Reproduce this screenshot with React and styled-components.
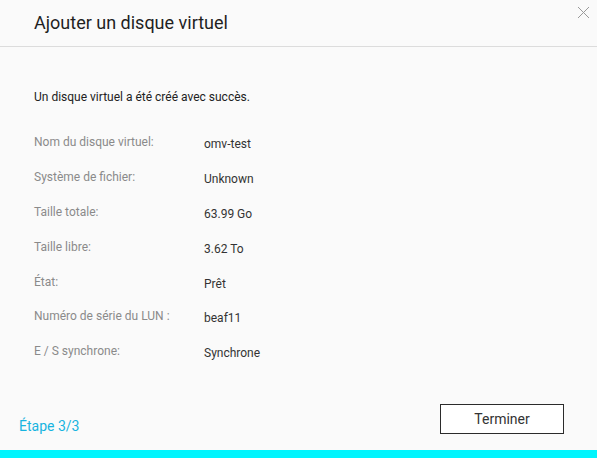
import React from 'react';
import styled, {createGlobalStyle} from 'styled-components';

const GlobalStyle = createGlobalStyle`
    html, body {
        margin: 0;
        padding: 0;
        background: #fafafa;
    }
    body {
        font-family: Roboto, "Liberation Sans", Arial, sans-serif;
    }
`
const Dialog = styled.div`
    position: relative;
    display: flex;
    flex-direction: column;
    width: 597px;
    height: 458px;
    background: #fafafa;
    box-sizing: border-box;
`
const Header = styled.header`
    display: flex;
    align-items: center;
    height: 47px;
    padding: 0 34px;
    border-bottom: 1px solid #dcdcdc;
    box-sizing: border-box;
`
const Title = styled.h1`
    margin: 0;
    padding-bottom: 2px;
    font-size: 18px;
    font-weight: 400;
    color: #1f1f1f;
`
const CloseBtn = styled.button`
    position: absolute;
    top: 6px;
    right: 7px;
    width: 13px;
    height: 13px;
    padding: 0;
    border: none;
    background: transparent;
    cursor: pointer;
    svg {
        display: block;
    }
`
const Content = styled.div`
    flex: 1;
    padding: 42px 34px 0 34px;
`
const Message = styled.p`
    margin: 0 0 20px 0;
    font-size: 12px;
    line-height: 16px;
    color: #222;
`
const InfoRow = styled.div`
    display: grid;
    grid-template-columns: 170px 1fr;
    align-items: center;
    height: 34.8px;
    font-size: 12px;
`
const Label = styled.span`
    color: #8a8a8a;
`
const Value = styled.span`
    color: #333;
    padding-top: 4px;
`
const Footer = styled.footer`
    display: flex;
    justify-content: space-between;
    align-items: flex-end;
    padding: 0 33px 16px 19px;
`
const Step = styled.span`
    font-size: 14px;
    line-height: 16px;
    color: #16b4e0;
`
const FinishBtn = styled.button`
    width: 124px;
    height: 30px;
    border: 1px solid #2b2b2b;
    background: #fff;
    font-family: inherit;
    font-size: 14px;
    color: #333;
    cursor: pointer;
`
const BottomBar = styled.div`
    height: 8px;
    background: #00f5fd;
`

const rows = [
    ['Nom du disque virtuel:', 'omv-test'],
    ['Système de fichier:', 'Unknown'],
    ['Taille totale:', '63.99 Go'],
    ['Taille libre:', '3.62 To'],
    ['État:', 'Prêt'],
    ['Numéro de série du LUN :', 'beaf11'],
    ['E / S synchrone:', 'Synchrone'],
];

export default function App() {
    return (
        <Dialog>
            <GlobalStyle />
            <Header>
                <Title>Ajouter un disque virtuel</Title>
            </Header>
            <CloseBtn aria-label="Fermer">
                <svg width="13" height="13" viewBox="0 0 13 13">
                    <path d="M1 1L12 12M12 1L1 12" stroke="#9a9a9a" strokeWidth="1" fill="none" />
                </svg>
            </CloseBtn>
            <Content>
                <Message>Un disque virtuel a été créé avec succès.</Message>
                {rows.map(([label, value]) => (
                    <InfoRow key={label}>
                        <Label>{label}</Label>
                        <Value>{value}</Value>
                    </InfoRow>
                ))}
            </Content>
            <Footer>
                <Step>Étape 3/3</Step>
                <FinishBtn type="button">Terminer</FinishBtn>
            </Footer>
            <BottomBar />
        </Dialog>
    );
}
